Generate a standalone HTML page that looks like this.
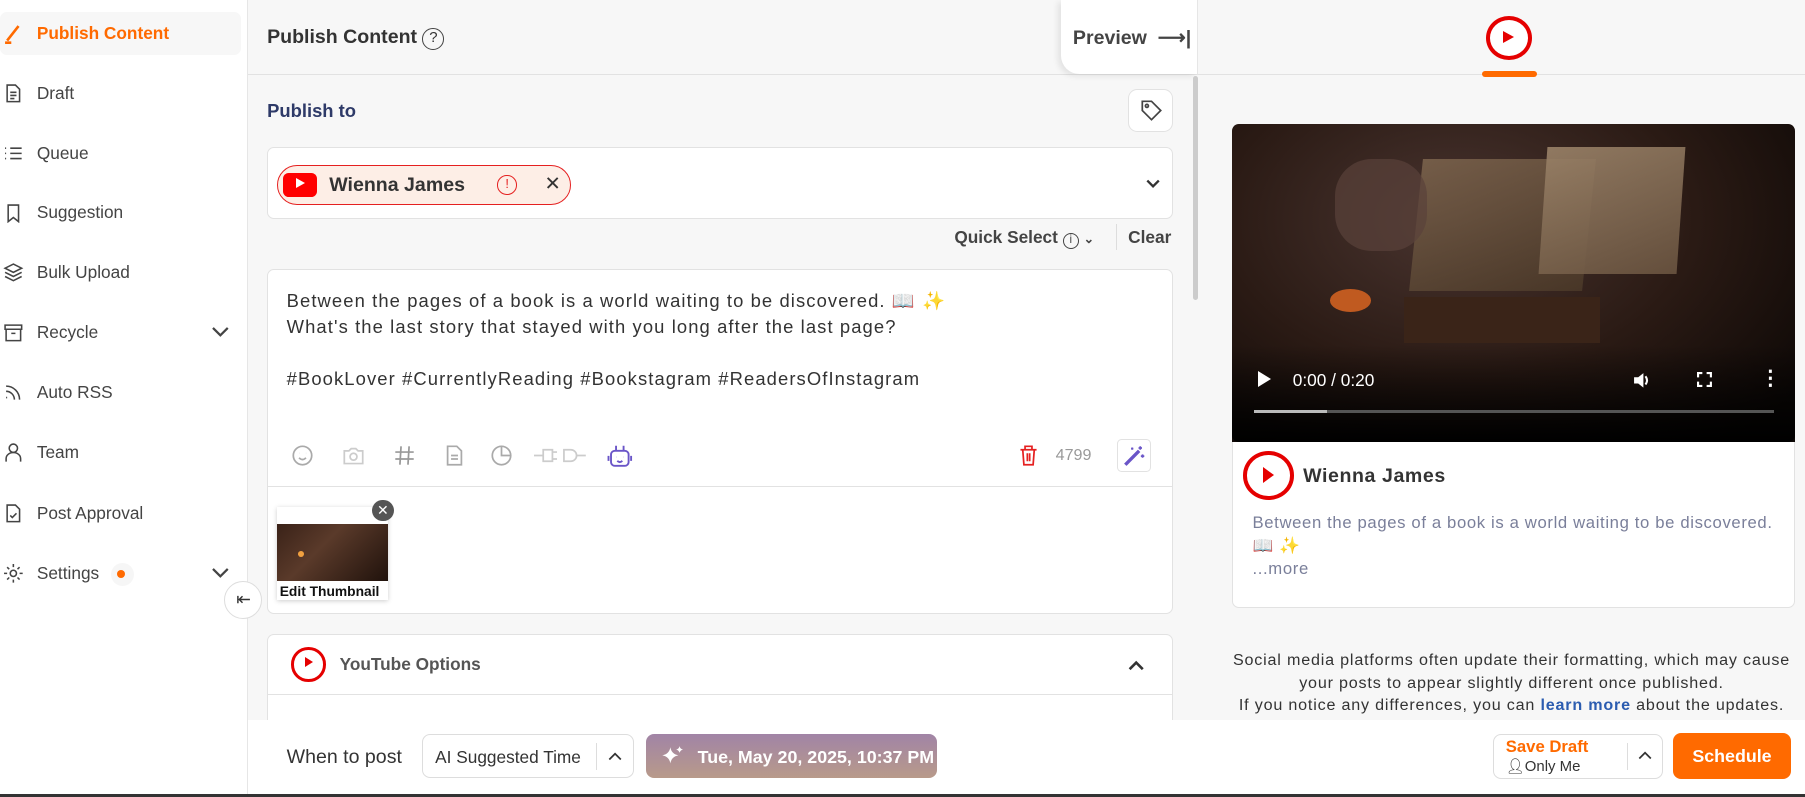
<!DOCTYPE html>
<html><head><meta charset="utf-8">
<style>
html{zoom:1.1512}
*{box-sizing:border-box;margin:0;padding:0}
body{width:1568px;height:692px;overflow:hidden;background:#f7f7f7;font-family:"Liberation Sans",sans-serif;color:#333;position:relative}
.abs{position:absolute}
.side{left:0;top:0;width:215px;height:692px;background:#fff;border-right:1px solid #e6e6e6}
.item{position:absolute;left:0;width:209px;height:38px;display:flex;align-items:center;font-size:15px;color:#444}
.item svg{position:absolute;left:3px;width:18px;height:18px;fill:none;stroke:#444;stroke-width:1.5}
.item span{position:absolute;left:32px}
.chev{position:absolute;left:182px;width:14px;height:14px}
.box{position:absolute;background:#fff;border:1px solid #e2e2e2;border-radius:6px}
.ic{position:absolute;width:20px;height:20px;fill:none;stroke:#aaa;stroke-width:1.5}
</style></head><body>

<div class="abs side">
 <div class="item" style="top:10px;background:#f7f7f7;border-radius:6px;color:#ff6a00;font-weight:bold">
  <svg viewBox="0 0 20 20" style="stroke:#ff6a00;stroke-width:2.5"><path d="M4 17L15 3M2 19h6"/></svg><span>Publish Content</span></div>
 <div class="item" style="top:62px"><svg viewBox="0 0 20 20"><path d="M4 2h8l4 4v12H4z M7 9h6M7 12h6M7 15h4"/></svg><span>Draft</span></div>
 <div class="item" style="top:114px"><svg viewBox="0 0 20 20"><path d="M7 5h11M7 10h11M7 15h11M2 5h1M2 10h1M2 15h1"/></svg><span>Queue</span></div>
 <div class="item" style="top:166px"><svg viewBox="0 0 20 20"><path d="M5 2h10v16l-5-4-5 4z"/></svg><span>Suggestion</span></div>
 <div class="item" style="top:218px"><svg viewBox="0 0 20 20"><path d="M10 2l8 4-8 4-8-4z M2 10l8 4 8-4M2 14l8 4 8-4"/></svg><span>Bulk Upload</span></div>
 <div class="item" style="top:270px"><svg viewBox="0 0 20 20"><path d="M2 3h16v4H2z M3 7v11h14V7 M8 11h4"/></svg><span>Recycle</span><svg class="chev" viewBox="0 0 14 14" style="left:182px;stroke:#444"><path d="M2 4l5 5 5-5"/></svg></div>
 <div class="item" style="top:322px"><svg viewBox="0 0 20 20"><path d="M3 4a13 13 0 0 1 13 13M3 9a8 8 0 0 1 8 8M3 15h1"/></svg><span>Auto RSS</span></div>
 <div class="item" style="top:374px"><svg viewBox="0 0 20 20"><circle cx="10" cy="6" r="4"/><path d="M3 19v-3a6 5 0 0 1 14 0v3"/></svg><span>Team</span></div>
 <div class="item" style="top:427px"><svg viewBox="0 0 20 20"><path d="M4 2h8l4 4v12H4z M7 12l2 2 4-4"/></svg><span>Post Approval</span></div>
 <div class="item" style="top:479px"><svg viewBox="0 0 20 20"><circle cx="10" cy="10" r="3"/><path d="M10 1v3M10 16v3M1 10h3M16 10h3M4 4l2 2M14 14l2 2M4 16l2-2M14 6l2-2"/></svg><span>Settings</span>
  <div class="abs" style="left:96px;top:10px;width:20px;height:20px;border-radius:10px;background:#f6f6f6"></div><div class="abs" style="left:102px;top:16px;width:7px;height:7px;border-radius:4px;background:#ff6a00"></div>
  <svg class="chev" viewBox="0 0 14 14" style="left:182px;stroke:#444"><path d="M2 4l5 5 5-5"/></svg></div>
</div>
<div class="abs" style="left:195px;top:505px;width:33px;height:33px;border-radius:50%;background:#fff;border:1px solid #ddd;font-size:15px;text-align:center;line-height:31px;color:#333">⇤</div>

<!-- header -->
<div class="abs" style="left:215px;top:0;width:825px;height:65px;border-bottom:1px solid #e2e2e2;background:#f7f7f7"></div>
<div class="abs" style="left:232px;top:23px;font-size:17px;font-weight:bold;color:#333">Publish Content <span style="display:inline-block;width:19px;height:19px;border:1.5px solid #444;border-radius:50%;font-size:13px;text-align:center;line-height:16px;font-weight:normal;vertical-align:1px">?</span></div>
<div class="abs" style="left:922px;top:0;width:118px;height:64px;background:#fff;border-radius:0 0 0 16px;box-shadow:-3px 2px 5px rgba(0,0,0,.08);font-size:17px;font-weight:bold;color:#444;padding:23px 0 0 10px">Preview &nbsp;⟶|</div>
<div class="abs" style="left:1040px;top:0;width:528px;height:65px;border-bottom:1px solid #e2e2e2;border-left:1px solid #e6e6e6;background:#f7f7f7"></div>
<div class="abs" style="left:1291px;top:14px;width:40px;height:38px;border-radius:50%;border:4px solid #e50000;background:#fff"></div>
<div class="abs" style="left:1306px;top:27px;width:0;height:0;border-left:10px solid #e50000;border-top:6px solid transparent;border-bottom:6px solid transparent"></div>
<div class="abs" style="left:1287px;top:62px;width:48px;height:5px;border-radius:3px;background:#ff6a00"></div>

<!-- main -->
<div class="abs" style="left:232px;top:87px;font-size:16px;font-weight:bold;color:#2e3a68">Publish to</div>
<div class="box" style="left:980px;top:77px;width:39px;height:38px;border-radius:8px"><svg viewBox="0 0 20 20" style="position:absolute;left:9px;top:8px;width:20px;height:20px;fill:none;stroke:#444;stroke-width:1.5"><path d="M2 2h8l8 8-8 8-8-8z"/><circle cx="6" cy="6" r="1.3"/></svg></div>
<div class="box" style="left:232px;top:128px;width:787px;height:62px"></div>
<div class="abs" style="left:241px;top:143px;width:255px;height:35px;border-radius:18px;background:#fdeee6;border:1px solid #e52020"></div>
<div class="abs" style="left:246px;top:150px;width:29px;height:21px;border-radius:5px;background:#f00"></div>
<div class="abs" style="left:257px;top:155px;border-left:8px solid #fff;border-top:5px solid transparent;border-bottom:5px solid transparent"></div>
<div class="abs" style="left:286px;top:151px;font-size:17px;font-weight:bold;color:#333">Wienna James</div>
<div class="abs" style="left:432px;top:152px;width:17px;height:17px;border:1.5px solid #e52020;border-radius:50%;color:#e52020;font-size:11px;text-align:center;line-height:14px">!</div>
<div class="abs" style="left:473px;top:149px;font-size:17px;color:#333">✕</div>
<svg class="abs" viewBox="0 0 14 14" style="left:995px;top:153px;width:14px;height:14px;fill:none;stroke:#333;stroke-width:2"><path d="M2 4l5 5 5-5"/></svg>
<div class="abs" style="left:829px;top:197px;font-size:15px;font-weight:bold;color:#444">Quick Select <span style="display:inline-block;width:14px;height:14px;border:1px solid #444;border-radius:50%;font-size:10px;text-align:center;line-height:12px;font-weight:normal">i</span> <span style="font-size:11px">⌄</span></div>
<div class="abs" style="left:969px;top:195px;width:1px;height:22px;background:#ddd"></div>
<div class="abs" style="left:980px;top:197px;font-size:15px;font-weight:bold;color:#444">Clear</div>

<div class="box" style="left:232px;top:234px;width:787px;height:299px"></div>
<div class="abs" style="left:249px;top:250px;font-size:16px;line-height:22.5px;color:#333;letter-spacing:0.95px;white-space:nowrap">Between the pages of a book is a world waiting to be discovered. 📖 ✨<br>What's the last story that stayed with you long after the last page?<br><br>#BookLover #CurrentlyReading #Bookstagram #ReadersOfInstagram</div>
<svg class="ic" viewBox="0 0 20 20" style="left:253px;top:386px"><circle cx="10" cy="10" r="8"/><path d="M7 12q3 3 6 0M7 8h.1M13 8h.1"/></svg>
<svg class="ic" viewBox="0 0 20 20" style="left:297px;top:386px;stroke:#ccc"><path d="M2 6h4l2-2h4l2 2h4v11H2z"/><circle cx="10" cy="11" r="3"/></svg>
<svg class="ic" viewBox="0 0 20 20" style="left:341px;top:386px;stroke:#999"><path d="M7 2L6 18M14 2l-1 16M2 7h16M2 13h16"/></svg>
<svg class="ic" viewBox="0 0 20 20" style="left:385px;top:386px"><path d="M4 2h8l4 4v12H4z M7 10h6M7 13h6"/></svg>
<svg class="ic" viewBox="0 0 20 20" style="left:426px;top:386px"><circle cx="10" cy="10" r="8"/><path d="M10 2v8h8"/></svg>
<svg class="ic" viewBox="0 0 46 20" style="left:464px;top:386px;width:46px;stroke:#ccc"><path d="M0 10h8M8 5h8v10H8zM16 7h4M16 13h4M26 5h6a5 5 0 0 1 0 10h-6zM37 10h8"/></svg>
<svg class="ic" viewBox="0 0 22 22" style="left:526px;top:384px;width:24px;height:24px;stroke:#6a55c8"><rect x="4" y="7" width="14" height="12" rx="3"/><path d="M8 7V3M14 7V3M2 11v4M20 11v4M8 12h.1M14 12h.1M9 15q2 2 4 0"/></svg>
<svg class="ic" viewBox="0 0 20 20" style="left:883px;top:386px;stroke:#e52020"><path d="M3 5h14M7 5V2h6v3M5 5l1 13h8l1-13M9 8v7M11 8v7"/></svg>
<div class="abs" style="left:917px;top:387px;font-size:14px;color:#999">4799</div>
<div class="box" style="left:970px;top:381px;width:30px;height:29px;border-radius:4px"><svg viewBox="0 0 20 20" style="position:absolute;left:5px;top:4px;width:20px;height:20px;fill:none;stroke:#6a55c8;stroke-width:1.5"><path d="M3 18L14 7l-1-1L2 17zM15 2v3M13.5 3.5h3M17 9v3M15.5 10.5h3M8 3v2M7 4h2"/></svg></div>
<div class="abs" style="left:233px;top:422px;width:785px;height:1px;background:#e2e2e2"></div>
<div class="abs" style="left:241px;top:440px;width:96px;height:81px;background:#fff;box-shadow:0 1px 4px rgba(0,0,0,.2)"></div>
<div class="abs" style="left:241px;top:455px;width:96px;height:50px;background:linear-gradient(135deg,#3a2218,#5a3a2a 40%,#20120c)"></div>
<div class="abs" style="left:259px;top:479px;width:5px;height:5px;border-radius:50%;background:#f0a040"></div>
<div class="abs" style="left:243px;top:506px;font-size:12px;font-weight:bold;color:#111">Edit Thumbnail</div>
<div class="abs" style="left:323px;top:434px;width:19px;height:19px;border-radius:50%;background:#555;color:#fff;font-size:12px;text-align:center;line-height:19px">✕</div>

<div class="box" style="left:232px;top:551px;width:787px;height:100px;border-radius:6px 6px 0 0"></div>
<div class="abs" style="left:253px;top:562px;width:30px;height:30px;border-radius:50%;border:3px solid #e50000;background:#fff"></div>
<div class="abs" style="left:265px;top:571px;border-left:7px solid #e50000;border-top:5px solid transparent;border-bottom:5px solid transparent"></div>
<div class="abs" style="left:295px;top:568px;font-size:15px;font-weight:bold;color:#555">YouTube Options</div>
<svg class="abs" viewBox="0 0 14 14" style="left:979px;top:570px;width:16px;height:16px;fill:none;stroke:#333;stroke-width:2"><path d="M2 10l5-5 5 5"/></svg>
<div class="abs" style="left:233px;top:603px;width:785px;height:1px;background:#e2e2e2"></div>
<div class="abs" style="left:1036px;top:66px;width:5px;height:195px;background:#ccc;border-radius:3px"></div>

<!-- right preview -->
<div class="box" style="left:1070px;top:108px;width:489px;height:420px"></div>
<div class="abs" style="left:1070px;top:108px;width:489px;height:276px;border-radius:6px 6px 0 0;background:radial-gradient(ellipse at 40% 30%,#4a3530,#2a1a14 50%,#0d0806 90%);overflow:hidden">
 <div class="abs" style="left:160px;top:30px;width:150px;height:115px;background:linear-gradient(160deg,#7a624c,#4a3828);transform:skewX(-6deg);opacity:.9"></div>
 <div class="abs" style="left:270px;top:20px;width:120px;height:110px;background:linear-gradient(160deg,#9a8268,#6a5440);transform:skewX(-4deg);opacity:.9"></div>
 <div class="abs" style="left:150px;top:150px;width:170px;height:40px;background:#3a2418"></div>
 <div class="abs" style="left:85px;top:143px;width:36px;height:20px;border-radius:50%;background:#c05a20"></div>
 <div class="abs" style="left:90px;top:30px;width:80px;height:80px;border-radius:40%;background:#5a423a;opacity:.7"></div>
</div>
<div class="abs" style="left:1070px;top:300px;width:489px;height:84px;background:linear-gradient(transparent,#000);border-radius:0 0 6px 6px"></div>
<div class="abs" style="left:1093px;top:322px;border-left:12px solid #fff;border-top:7px solid transparent;border-bottom:7px solid transparent"></div>
<div class="abs" style="left:1123px;top:321px;font-size:15px;color:#fff">0:00 / 0:20</div>
<svg class="abs" viewBox="0 0 20 20" style="left:1418px;top:321px;width:18px;height:18px"><path d="M2 7h4l5-4v14l-5-4H2z" fill="#fff"/><path d="M13 6q3 4 0 8" stroke="#fff" stroke-width="2" fill="none"/></svg>
<svg class="abs" viewBox="0 0 14 14" style="left:1474px;top:323px;width:13px;height:13px;fill:none;stroke:#fff;stroke-width:2"><path d="M1 5V1h4M9 1h4v4M13 9v4H9M5 13H1V9"/></svg>
<div class="abs" style="left:1529px;top:318px;font-size:18px;color:#fff;font-weight:bold">⋮</div>
<div class="abs" style="left:1089px;top:356px;width:452px;height:3px;background:#555"></div>
<div class="abs" style="left:1089px;top:356px;width:64px;height:3px;background:#bbb"></div>
<div class="abs" style="left:1080px;top:392px;width:44px;height:42px;border-radius:50%;border:4px solid #e50000;background:#fff"></div>
<div class="abs" style="left:1097px;top:406px;border-left:10px solid #e50000;border-top:7px solid transparent;border-bottom:7px solid transparent"></div>
<div class="abs" style="left:1132px;top:404px;font-size:17px;font-weight:bold;color:#333;letter-spacing:0.5px">Wienna James</div>
<div class="abs" style="left:1088px;top:444px;font-size:14.5px;line-height:20px;color:#7a7f9a;letter-spacing:0.55px;white-space:nowrap">Between the pages of a book is a world waiting to be discovered.<br>📖 ✨<br>...more</div>
<div class="abs" style="left:1040px;top:564px;width:546px;text-align:center;font-size:14px;line-height:19.5px;color:#333;letter-spacing:0.7px;white-space:nowrap">Social media platforms often update their formatting, which may cause<br>your posts to appear slightly different once published.<br>If you notice any differences, you can <b style="color:#2b5cb0">learn more</b> about the updates.</div>

<!-- bottom bar -->
<div class="abs" style="left:215px;top:625px;width:1353px;height:65px;background:#fff"></div>
<div class="abs" style="left:0;top:690px;width:1568px;height:2px;background:#333"></div>
<div class="abs" style="left:249px;top:648px;font-size:17px;color:#333">When to post</div>
<div class="abs" style="left:367px;top:638px;width:184px;height:38px;border:1px solid #ddd;border-radius:7px;background:#fff"></div>
<div class="abs" style="left:378px;top:649px;font-size:15px;color:#333">AI Suggested Time</div>
<div class="abs" style="left:518px;top:645px;width:1px;height:24px;background:#ddd"></div>
<svg class="abs" viewBox="0 0 14 14" style="left:527px;top:650px;width:14px;height:14px;fill:none;stroke:#333;stroke-width:1.5"><path d="M2 10l5-5 5 5"/></svg>
<div class="abs" style="left:561px;top:638px;width:253px;height:38px;border-radius:7px;background:linear-gradient(#a184a6,#b89a8a)"></div>
<svg class="abs" viewBox="0 0 20 20" style="left:573px;top:647px;width:22px;height:20px;fill:#fff"><path d="M8 2q1 6 7 7-6 1-7 7-1-6-7-7 6-1 7-7zM16 1q.5 2.5 3 3-2.5.5-3 3-.5-2.5-3-3 2.5-.5 3-3z"/></svg>
<div class="abs" style="left:606px;top:649px;font-size:15.5px;font-weight:bold;color:#fff">Tue, May 20, 2025, 10:37 PM</div>
<div class="abs" style="left:1297px;top:638px;width:148px;height:39px;border:1px solid #ddd;border-radius:7px;background:#fff"></div>
<div class="abs" style="left:1308px;top:640px;font-size:14.5px;font-weight:bold;color:#ff6a00">Save Draft</div>
<div class="abs" style="left:1308px;top:658px;font-size:13px;color:#333">👤︎Only Me</div>
<div class="abs" style="left:1413px;top:645px;width:1px;height:24px;background:#ddd"></div>
<svg class="abs" viewBox="0 0 14 14" style="left:1422px;top:649px;width:14px;height:14px;fill:none;stroke:#333;stroke-width:1.5"><path d="M2 10l5-5 5 5"/></svg>
<div class="abs" style="left:1453px;top:637px;width:103px;height:40px;border-radius:7px;background:#ff6a00;color:#fff;font-size:15.5px;font-weight:bold;text-align:center;line-height:40px">Schedule</div>
</body></html>
